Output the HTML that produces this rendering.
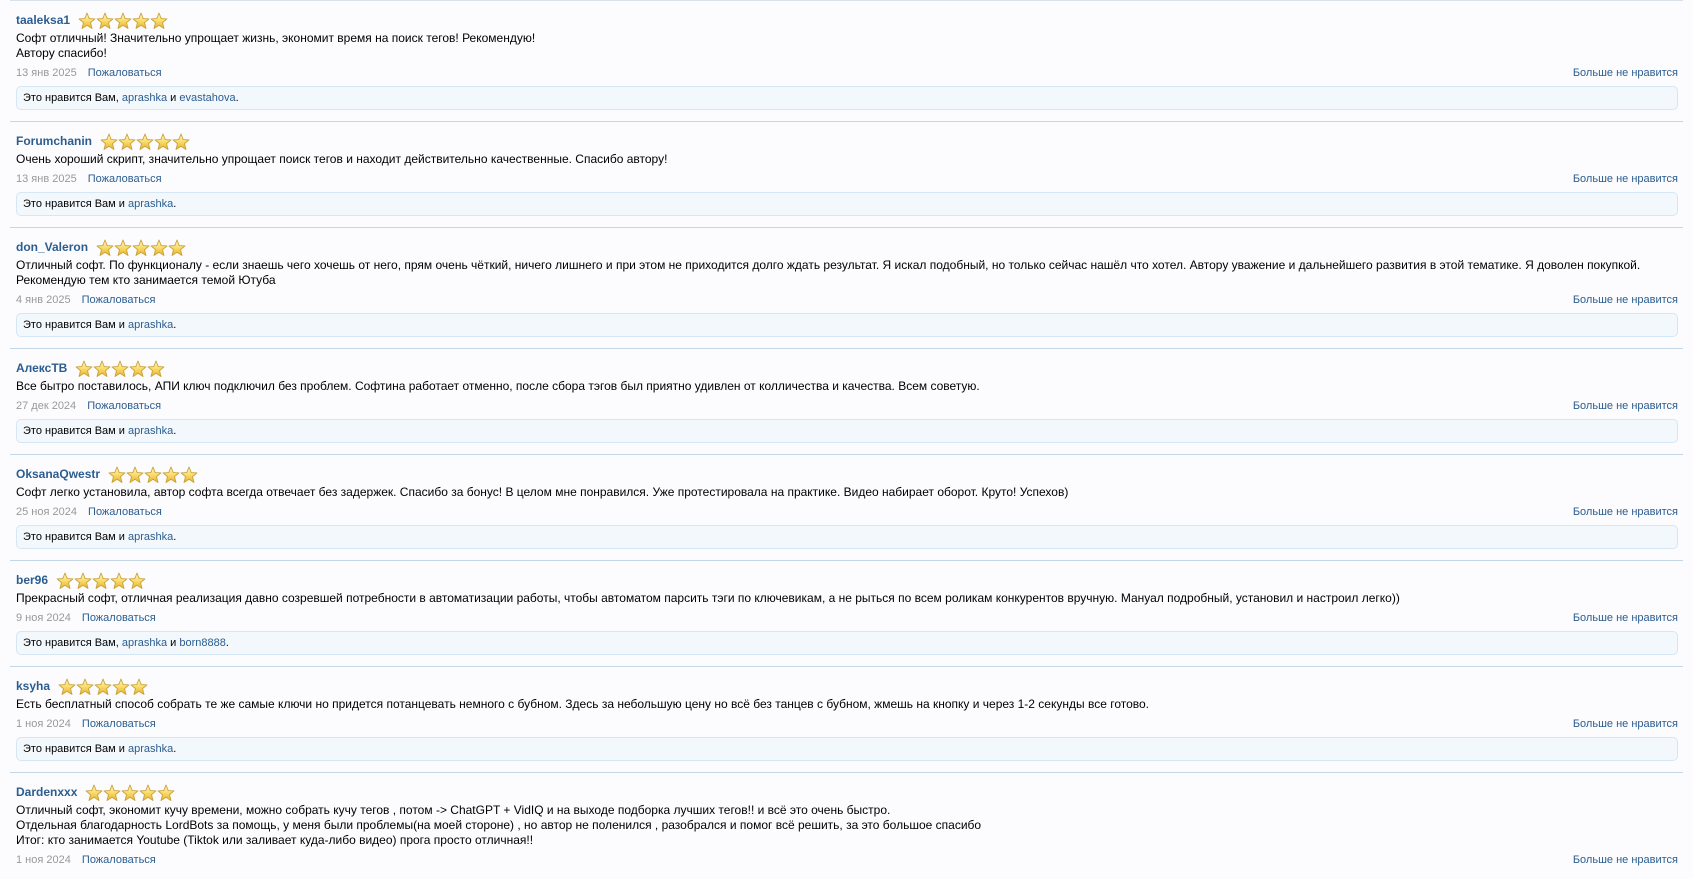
<!DOCTYPE html>
<html><head><meta charset="utf-8"><style>
body{margin:0;background:#fcfcff;font-family:"Liberation Sans",Arial,sans-serif;font-size:12px;color:#000;width:1693px;height:875px;overflow:hidden}
.wrap{position:relative;margin-left:10px;width:1673px}
.m{border-top:1px solid #c5d6e6;padding:9px 0 11px 6px;position:relative}
.first{border-top:1px solid #d7e2ec}
.u{height:21px;line-height:21px;font-weight:bold;color:#2b5d8f;font-size:12px;display:flex;align-items:center}
.u svg{margin-left:8px}
.t{line-height:15px;white-space:nowrap}
.d{margin-top:4px;height:16px;line-height:16px;color:#999;font-size:11px;position:relative}
.d a{color:#2b5d8f;margin-left:8px}
.d .r{position:absolute;right:5px;top:0;color:#2b5d8f;margin:0}
.lk{margin-top:5px;margin-right:5px;height:22px;line-height:22px;border:1px solid #d5e6f4;border-radius:5px;background:#f3f8fc;padding-left:6px;font-size:11px}
.lk a,a{color:#2b5d8f;text-decoration:none}
</style></head><body>
<svg width="0" height="0" style="position:absolute"><defs>
<linearGradient id="g" x1="0" y1="0" x2="0" y2="1"><stop offset="0" stop-color="#fff8d0"/><stop offset="0.5" stop-color="#f9dc6a"/><stop offset="1" stop-color="#e8b030"/></linearGradient>
<symbol id="s" viewBox="0 0 18 18"><polygon points="9,1 11.2,6.6 17,6.9 12.5,10.6 14,16.5 9,13.2 4,16.5 5.5,10.6 1,6.9 6.8,6.6" fill="url(#g)" stroke="#c9a23a" stroke-width="0.9" stroke-linejoin="round"/></symbol>
</defs></svg>
<div class="wrap">
<div class="m first"><div class="u">taaleksa1<svg width="90" height="18"><use href="#s" x="0" width="18" height="18"/><use href="#s" x="18" width="18" height="18"/><use href="#s" x="36" width="18" height="18"/><use href="#s" x="54" width="18" height="18"/><use href="#s" x="72" width="18" height="18"/></svg></div>
<div class="t">Софт отличный! Значительно упрощает жизнь, экономит время на поиск тегов! Рекомендую!<br>Автору спасибо!</div>
<div class="d">13 янв 2025 <a>Пожаловаться</a><a class="r">Больше не нравится</a></div>
<div class="lk">Это нравится Вам, <a>aprashka</a> и <a>evastahova</a>.</div></div>

<div class="m"><div class="u">Forumchanin<svg width="90" height="18"><use href="#s" x="0" width="18" height="18"/><use href="#s" x="18" width="18" height="18"/><use href="#s" x="36" width="18" height="18"/><use href="#s" x="54" width="18" height="18"/><use href="#s" x="72" width="18" height="18"/></svg></div>
<div class="t">Очень хороший скрипт, значительно упрощает поиск тегов и находит действительно качественные. Спасибо автору!</div>
<div class="d">13 янв 2025 <a>Пожаловаться</a><a class="r">Больше не нравится</a></div>
<div class="lk">Это нравится Вам и <a>aprashka</a>.</div></div>

<div class="m"><div class="u">don_Valeron<svg width="90" height="18"><use href="#s" x="0" width="18" height="18"/><use href="#s" x="18" width="18" height="18"/><use href="#s" x="36" width="18" height="18"/><use href="#s" x="54" width="18" height="18"/><use href="#s" x="72" width="18" height="18"/></svg></div>
<div class="t">Отличный софт. По функционалу - если знаешь чего хочешь от него, прям очень чёткий, ничего лишнего и при этом не приходится долго ждать результат. Я искал подобный, но только сейчас нашёл что хотел. Автору уважение и дальнейшего развития в этой тематике. Я доволен покупкой.<br>Рекомендую тем кто занимается темой Ютуба</div>
<div class="d">4 янв 2025 <a>Пожаловаться</a><a class="r">Больше не нравится</a></div>
<div class="lk">Это нравится Вам и <a>aprashka</a>.</div></div>

<div class="m"><div class="u">АлексТВ<svg width="90" height="18"><use href="#s" x="0" width="18" height="18"/><use href="#s" x="18" width="18" height="18"/><use href="#s" x="36" width="18" height="18"/><use href="#s" x="54" width="18" height="18"/><use href="#s" x="72" width="18" height="18"/></svg></div>
<div class="t">Все бытро поставилось, АПИ ключ подключил без проблем. Софтина работает отменно, после сбора тэгов был приятно удивлен от колличества и качества. Всем советую.</div>
<div class="d">27 дек 2024 <a>Пожаловаться</a><a class="r">Больше не нравится</a></div>
<div class="lk">Это нравится Вам и <a>aprashka</a>.</div></div>

<div class="m"><div class="u">OksanaQwestr<svg width="90" height="18"><use href="#s" x="0" width="18" height="18"/><use href="#s" x="18" width="18" height="18"/><use href="#s" x="36" width="18" height="18"/><use href="#s" x="54" width="18" height="18"/><use href="#s" x="72" width="18" height="18"/></svg></div>
<div class="t">Софт легко установила, автор софта всегда отвечает без задержек. Спасибо за бонус! В целом мне понравился. Уже протестировала на практике. Видео набирает оборот. Круто! Успехов)</div>
<div class="d">25 ноя 2024 <a>Пожаловаться</a><a class="r">Больше не нравится</a></div>
<div class="lk">Это нравится Вам и <a>aprashka</a>.</div></div>

<div class="m"><div class="u">ber96<svg width="90" height="18"><use href="#s" x="0" width="18" height="18"/><use href="#s" x="18" width="18" height="18"/><use href="#s" x="36" width="18" height="18"/><use href="#s" x="54" width="18" height="18"/><use href="#s" x="72" width="18" height="18"/></svg></div>
<div class="t">Прекрасный софт, отличная реализация давно созревшей потребности в автоматизации работы, чтобы автоматом парсить тэги по ключевикам, а не рыться по всем роликам конкурентов вручную. Мануал подробный, установил и настроил легко))</div>
<div class="d">9 ноя 2024 <a>Пожаловаться</a><a class="r">Больше не нравится</a></div>
<div class="lk">Это нравится Вам, <a>aprashka</a> и <a>born8888</a>.</div></div>

<div class="m"><div class="u">ksyha<svg width="90" height="18"><use href="#s" x="0" width="18" height="18"/><use href="#s" x="18" width="18" height="18"/><use href="#s" x="36" width="18" height="18"/><use href="#s" x="54" width="18" height="18"/><use href="#s" x="72" width="18" height="18"/></svg></div>
<div class="t">Есть бесплатный способ собрать те же самые ключи но придется потанцевать немного с бубном. Здесь за небольшую цену но всё без танцев с бубном, жмешь на кнопку и через 1-2 секунды все готово.</div>
<div class="d">1 ноя 2024 <a>Пожаловаться</a><a class="r">Больше не нравится</a></div>
<div class="lk">Это нравится Вам и <a>aprashka</a>.</div></div>

<div class="m"><div class="u">Dardenxxx<svg width="90" height="18"><use href="#s" x="0" width="18" height="18"/><use href="#s" x="18" width="18" height="18"/><use href="#s" x="36" width="18" height="18"/><use href="#s" x="54" width="18" height="18"/><use href="#s" x="72" width="18" height="18"/></svg></div>
<div class="t">Отличный софт, экономит кучу времени, можно собрать кучу тегов , потом -&gt; ChatGPT + VidIQ и на выходе подборка лучших тегов!! и всё это очень быстро.<br>Отдельная благодарность LordBots за помощь, у меня были проблемы(на моей стороне) , но автор не поленился , разобрался и помог всё решить, за это большое спасибо<br>Итог: кто занимается Youtube (Tiktok или заливает куда-либо видео) прога просто отличная!!</div>
<div class="d">1 ноя 2024 <a>Пожаловаться</a><a class="r">Больше не нравится</a></div>
</div>
</div>
</body></html>
